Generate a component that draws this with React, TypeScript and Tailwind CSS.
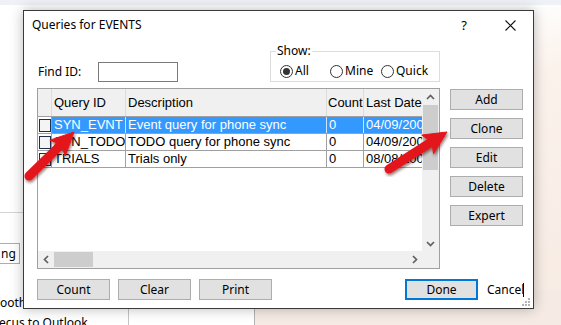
import React from "react";

const rows = [
  { id: "SYN_EVNT", desc: "Event query for phone sync", count: "0", date: "04/09/2006", selected: true },
  { id: "SYN_TODO", desc: "TODO query for phone sync", count: "0", date: "04/09/2006", selected: false },
  { id: "TRIALS", desc: "Trials only", count: "0", date: "08/08/2009", selected: false },
];

const sideButtons = ["Add", "Clone", "Edit", "Delete", "Expert"];

function Chevron({ dir }: { dir: "up" | "down" | "left" | "right" }) {
  const pts = {
    up: "1,6 4.5,2.5 8,6",
    down: "1,3 4.5,6.5 8,3",
    left: "6,1 2.5,4.5 6,8",
    right: "3,1 6.5,4.5 3,8",
  }[dir];
  return (
    <svg width="9" height="9" viewBox="0 0 9 9">
      <polyline points={pts} fill="none" stroke="#606060" strokeWidth="1.7" />
    </svg>
  );
}

function Arrow({ x1, y1, x2, y2 }: { x1: number; y1: number; x2: number; y2: number }) {
  const dx = x2 - x1;
  const dy = y2 - y1;
  const len = Math.hypot(dx, dy);
  const ux = dx / len;
  const uy = dy / len;
  const nx = -uy;
  const ny = ux;
  const L = 21;
  const H = 11;
  const bx = x2 - ux * L;
  const by = y2 - uy * L;
  const head = [
    [x2, y2],
    [bx + nx * H - ux * 2, by + ny * H - uy * 2],
    [bx + ux * 3, by + uy * 3],
    [bx - nx * H - ux * 2, by - ny * H - uy * 2],
  ]
    .map((p) => p.join(","))
    .join(" ");
  return (
    <g filter="url(#sh)">
      <line x1={x1} y1={y1} x2={bx + ux * 4} y2={by + uy * 4} stroke="#e3141b" strokeWidth="9" strokeLinecap="round" />
      <polygon points={head} fill="#e3141b" strokeLinejoin="round" stroke="#e3141b" strokeWidth="1" />
    </g>
  );
}

function Btn({ label, done }: { label: string; done?: boolean }) {
  return (
    <div
      className={
        "w-[73px] h-[21px] flex items-center justify-center bg-[#e1e1e1] " +
        (done ? "border-2 border-[#0078d7]" : "border border-[#adadad]")
      }
    >
      {label}
    </div>
  );
}

function Radio({ label, checked }: { label: string; checked?: boolean }) {
  return (
    <div className="flex items-center gap-[2px]">
      <div className="w-[13px] h-[13px] rounded-full border border-[#333] bg-white flex items-center justify-center">
        {checked && <div className="w-[7px] h-[7px] rounded-full bg-[#333]" />}
      </div>
      <span>{label}</span>
    </div>
  );
}

function QueryList() {
  return (
    <div className="w-[403px] h-[181px] border border-[#a0a0a0] flex flex-col font-['Liberation_Sans',Arial,sans-serif] text-[13px]">
      <div className="h-[162px] flex">
        <div className="w-[384px] flex flex-col overflow-hidden">
          <div className="h-[28px] flex bg-[#f0f0f0] border-b border-[#a0a0a0] shrink-0">
            <div className="w-[14px] border-r border-[#dcdcdc]" />
            <div className="w-[74px] pl-[2px] border-r border-[#dcdcdc] flex items-center">Query ID</div>
            <div className="w-[201px] pl-[2px] border-r border-[#dcdcdc] flex items-center">Description</div>
            <div className="w-[37px] pl-[1px] border-r border-[#dcdcdc] flex items-center whitespace-nowrap overflow-hidden">Count</div>
            <div className="w-[58px] pl-[2px] flex items-center whitespace-nowrap overflow-hidden">Last Date</div>
          </div>
          {rows.map((r) => (
            <div key={r.id} className="h-[17px] flex border-b border-[#a0a0a0] shrink-0 whitespace-nowrap">
              <div className="w-[14px] border-r border-[#a0a0a0] flex items-center pl-[1px]">
                <div className="w-[13px] h-[13px] border border-[#1c3150] bg-[#f4f4f4]" />
              </div>
              <div
                className={
                  "w-[74px] pl-[2px] flex items-center overflow-hidden border-r " +
                  (r.selected ? "bg-[#3399ff] text-white border-[#cfe5ff]" : "border-[#a0a0a0]")
                }
              >
                {r.id}
              </div>
              <div
                className={
                  "w-[201px] pl-[2px] flex items-center overflow-hidden border-r " +
                  (r.selected ? "bg-[#3399ff] text-white border-[#cfe5ff]" : "border-[#a0a0a0]")
                }
              >
                {r.desc}
              </div>
              <div
                className={
                  "w-[37px] pl-[2px] flex items-center overflow-hidden border-r " +
                  (r.selected ? "bg-[#3399ff] text-white border-[#cfe5ff]" : "border-[#a0a0a0]")
                }
              >
                {r.count}
              </div>
              <div className={"w-[58px] pl-[2px] flex items-center overflow-hidden " + (r.selected ? "bg-[#3399ff] text-white" : "")}>
                {r.date}
              </div>
            </div>
          ))}
        </div>
        <div className="w-[17px] bg-[#f0f0f0] flex flex-col items-center">
          <div className="h-[16px] flex items-center justify-center">
            <Chevron dir="up" />
          </div>
          <div className="w-[15px] h-[65px] bg-[#cdcdcd]" />
          <div className="flex-1" />
          <div className="h-[16px] flex items-center justify-center">
            <Chevron dir="down" />
          </div>
        </div>
      </div>
      <div className="h-[17px] flex bg-[#f0f0f0]">
        <div className="w-[16px] flex items-center justify-center">
          <Chevron dir="left" />
        </div>
        <div className="w-[39px] h-[15px] mt-[1px] bg-[#cdcdcd]" />
        <div className="flex-1" />
        <div className="w-[16px] flex items-center justify-center">
          <Chevron dir="right" />
        </div>
        <div className="w-[17px]" />
      </div>
    </div>
  );
}

export default function App() {
  return (
    <div className="relative w-[561px] h-[325px] overflow-hidden bg-white font-['Noto_Sans',sans-serif] text-[12px] leading-[16px] text-black">
      {/* desktop and windows behind the dialog */}
      <div className="absolute inset-x-0 top-0 h-[5px] bg-[#eef1f6]" />
      <div className="absolute right-0 top-[5px] bottom-0 w-[40px] bg-[linear-gradient(160deg,#ffffff_0%,#fbf2ec_22%,#f7ebe3_100%)]" />
      <div className="absolute left-0 top-[212px] w-[260px] h-[1px] bg-[#d4d4d4]" />
      <div className="absolute left-[-1px] top-[243px] w-[21px] h-[21px] border border-[#adadad] bg-white flex items-center pl-[1px]">
        ng
      </div>
      <div className="absolute left-0 top-[295px] whitespace-nowrap">ooth devices</div>
      <div className="absolute left-[-1px] top-[315px] whitespace-nowrap">ecus to Outlook</div>
      <div className="absolute left-[128px] top-[290px] bottom-0 w-[1px] bg-[#c4c4c4]" />
      <div className="absolute left-[254px] top-[290px] bottom-0 w-[1px] bg-[#b4b4b4]" />
      <div className="absolute left-[255px] top-[290px] bottom-0 right-0 bg-[#f5ebe4]" />

      {/* dialog */}
      <div className="absolute left-[23px] top-[10px] w-[511px] h-[299px] border border-[#3a3a3a] bg-white shadow-[0_0_12px_rgba(0,0,0,0.28)] flex flex-col">
        <div className="h-[28px] flex items-center shrink-0">
          <span className="pl-[8px] flex-1">Queries for EVENTS</span>
          <span className="w-[46px] text-center text-[13px]">?</span>
          <span className="w-[46px] flex justify-center">
            <svg width="11" height="11" viewBox="0 0 11 11">
              <path d="M0.5 0.5 L10.5 10.5 M10.5 0.5 L0.5 10.5" stroke="#111" strokeWidth="1.1" />
            </svg>
          </span>
        </div>

        <div className="pl-[13px] flex flex-col">
          <div className="h-[49px] flex items-start">
            <span className="w-[61px] mt-[25px] pl-[1px]">Find ID:</span>
            <div className="mt-[23px] w-[80px] h-[20px] border border-[#7a7a7a]" />
            <fieldset className="ml-[92px] mt-[5px] w-[170px] h-[38px] border border-[#dcdcdc]">
              <legend className="ml-[5px] px-[1px] leading-[14px]">Show:</legend>
              <div className="flex mt-[5px] pl-[9px]">
                <div className="w-[50px]">
                  <Radio label="All" checked />
                </div>
                <div className="w-[51px]">
                  <Radio label="Mine" />
                </div>
                <Radio label="Quick" />
              </div>
            </fieldset>
          </div>

          <div className="flex">
            <QueryList />
            <div className="ml-[10px] mt-[1px] flex flex-col gap-2">
              {sideButtons.map((b) => (
                <Btn key={b} label={b} />
              ))}
            </div>
          </div>

          <div className="mt-[10px] flex items-center">
            <div className="flex gap-2">
              <Btn label="Count" />
              <Btn label="Clear" />
              <Btn label="Print" />
            </div>
            <div className="ml-[133px]">
              <Btn label="Done" done />
            </div>
            <span className="ml-[9px] flex items-center">
              Cancel
              <span className="inline-block w-[1px] h-[14px] bg-black ml-[-1px]" />
            </span>
          </div>
        </div>

        <svg className="absolute right-[3px] bottom-[2px]" width="9" height="9" viewBox="0 0 9 9">
          <rect x="7" y="1" width="2" height="2" fill="#b4b4b4" />
          <rect x="4" y="4" width="2" height="2" fill="#b4b4b4" />
          <rect x="7" y="4" width="2" height="2" fill="#b4b4b4" />
          <rect x="1" y="7" width="2" height="2" fill="#b4b4b4" />
          <rect x="4" y="7" width="2" height="2" fill="#b4b4b4" />
          <rect x="7" y="7" width="2" height="2" fill="#b4b4b4" />
        </svg>
      </div>

      {/* annotation arrows */}
      <svg className="absolute inset-0 pointer-events-none" width="561" height="325">
        <defs>
          <filter id="sh" x="-20%" y="-20%" width="140%" height="140%">
            <feDropShadow dx="1" dy="2" stdDeviation="1.5" floodColor="#400000" floodOpacity="0.55" />
          </filter>
        </defs>
        <Arrow x1={29} y1={176} x2={74} y2={132} />
        <Arrow x1={389} y1={169} x2={447} y2={132} />
      </svg>
    </div>
  );
}
